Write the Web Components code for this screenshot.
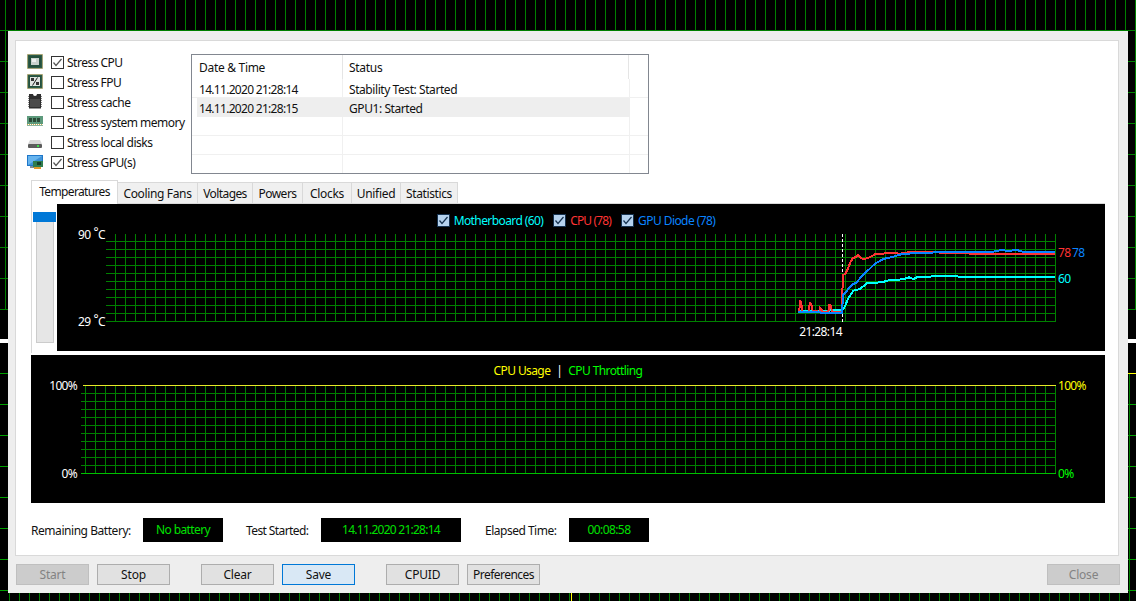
<!DOCTYPE html>
<html>
<head>
<meta charset="utf-8">
<title>System Stability Test</title>
<style>
html,body{margin:0;padding:0;background:#000;}
body{font:12px "Noto Sans","Open Sans","Liberation Sans",sans-serif;color:#111;overflow:hidden;}
</style>
</head>
<body>
<stress-desktop>
  <stress-panel>
    <top-row>
      <stress-list>
        <stress-item icon="cpu" checked>Stress CPU</stress-item>
        <stress-item icon="fpu">Stress FPU</stress-item>
        <stress-item icon="cache">Stress cache</stress-item>
        <stress-item icon="ram">Stress system memory</stress-item>
        <stress-item icon="disk">Stress local disks</stress-item>
        <stress-item icon="gpu" checked>Stress GPU(s)</stress-item>
      </stress-list>
      <log-table>
        <log-row time="14.11.2020 21:28:14" status="Stability Test: Started"></log-row>
        <log-row time="14.11.2020 21:28:15" status="GPU1: Started" selected></log-row>
        <log-row></log-row>
        <log-row></log-row>
        <log-row></log-row>
      </log-table>
    </top-row>
    <tab-strip>
      <tab-item active style="--w:87px;--ls:-.65px">Temperatures</tab-item>
      <tab-item style="--w:81px;--ls:-.35px">Cooling Fans</tab-item>
      <tab-item style="--w:56px;--ls:-.6px">Voltages</tab-item>
      <tab-item style="--w:51px;--ls:-.5px">Powers</tab-item>
      <tab-item style="--w:50px;--ls:-.3px">Clocks</tab-item>
      <tab-item style="--w:50px;--ls:-.3px">Unified</tab-item>
      <tab-item style="--w:58px;--ls:-.4px">Statistics</tab-item>
    </tab-strip>
    <tab-body>
      <temp-scale></temp-scale>
      <temp-chart>
        <legend-item color="#00ffff" style="--ls:-.6px">Motherboard (60)</legend-item>
        <legend-item color="#ff3333" style="--ls:-.85px">CPU (78)</legend-item>
        <legend-item color="#0a84ff" style="--ls:-.57px">GPU Diode (78)</legend-item>
      </temp-chart>
    </tab-body>
    <usage-chart></usage-chart>
    <status-row>
      <status-field label="Remaining Battery:" style="--label:112px;--box:80px;--ls:-.45px;--vs:-.6px">No battery</status-field>
      <status-field label="Test Started:" style="--label:75px;--box:140px;--ls:-.6px;--vs:-.75px">14.11.2020 21:28:14</status-field>
      <status-field label="Elapsed Time:" style="--label:84px;--box:80px;--ls:-.5px;--vs:-.6px">00:08:58</status-field>
    </status-row>
  </stress-panel>
  <button-bar>
    <win-button disabled>Start</win-button>
    <win-button>Stop</win-button>
    <win-button class="far">Clear</win-button>
    <win-button focused>Save</win-button>
    <win-button class="far">CPUID</win-button>
    <win-button style="--ls:-.55px">Preferences</win-button>
    <win-button disabled class="end">Close</win-button>
  </button-bar>
</stress-desktop>

<script>
const ICONS = {
  cpu: `<rect x="0.5" y="0.5" width="15" height="14" fill="#2d5c48" stroke="#b59a4c" stroke-dasharray="1 1"/>
        <rect x="2" y="2" width="12" height="11" fill="#24503d"/>
        <rect x="4" y="4" width="8" height="7" fill="#c9d2cd"/>
        <rect x="5" y="5" width="4" height="3" fill="#eef1ef"/>`,
  fpu: `<rect x="0.5" y="0.5" width="15" height="14" fill="#2d5c48" stroke="#b59a4c" stroke-dasharray="1 1"/>
        <rect x="2" y="2" width="12" height="11" fill="#24503d"/>
        <rect x="3" y="3" width="10" height="9" fill="#dfe5e1"/>
        <path d="M10.500 3.500 5.500 11.500" stroke="#222" fill="none"/>
        <rect x="4" y="4" width="3" height="3" fill="#333"/><rect x="9" y="8" width="3" height="3" fill="#333"/>`,
  cache: `<path d="M1 2h1M1 4h1M1 6h1M1 8h1M1 10h1M1 12h1M14 2h1M14 4h1M14 6h1M14 8h1M14 10h1M14 12h1" stroke="#888" transform="translate(0 .5)"/>
          <path d="M2 0h4a2 2 0 0 0 4 0h4v14.500H2z" fill="#2e2e2e"/>
          <rect x="3" y="5" width="10" height="8" fill="#4a4a4a"/>`,
  ram: `<rect x="0" y="2" width="16" height="8" fill="#5d9a7c"/>
        <path d="M2 4h3v4H2zM6 4h3v4H6zM10 4h3v4h-3z" fill="#2c4a38"/>
        <path d="M0 10.500h16" stroke="#c9a84c" stroke-dasharray="1 1"/>
        <rect x="0" y="11" width="16" height="1" fill="#8ab59f"/>`,
  disk: `<path d="M3 6h10l2 4H1z" fill="#d7d7d7"/>
         <rect x="1" y="10" width="14" height="4" rx="1" fill="#5c5c5c"/>
         <rect x="10" y="11" width="2" height="2" fill="#3fdc4a"/>`,
  gpu: `<rect x="0" y="1" width="16" height="11" fill="#1f77c9"/>
        <rect x="1" y="2" width="14" height="9" fill="#67b4ee"/>
        <path d="M1 11 15 2v9z" fill="#3f93d8"/>
        <rect x="3" y="12" width="5" height="2" fill="#7d8b96"/>
        <rect x="6" y="7" width="10" height="6" fill="#2f7d4f"/>
        <rect x="10" y="8" width="4" height="3" fill="#173f29"/>
        <rect x="7" y="13" width="7" height="2" fill="#e09a2b"/>`
}

const CHECK = `<svg width="13" height="13" viewBox="0 0 13 13"><path d="M2.500 6.500 5 9.500 10.500 3" fill="none" stroke="currentColor" stroke-width="1.200"/></svg>`

function define(name, css, html){
  customElements.define(name, class extends HTMLElement{
    constructor(){
      super()
      this.attachShadow({mode:'open'})
    }
    connectedCallback(){
      const inner = typeof html === 'function' ? html(this) : (html || '<slot></slot>')
      this.shadowRoot.innerHTML = `<style>${css}</style>${inner}`
    }
  })
}

define('stress-desktop', `
  :host{
    display:block;width:1136px;height:601px;box-sizing:border-box;padding:31px 8px 8px;
    background-color:#000;
    background-image:
      linear-gradient(#fff,#fff),
      linear-gradient(#ffff00,#ffff00),
      linear-gradient(#ffff00,#ffff00),
      repeating-linear-gradient(90deg,transparent 0 5px,#008000 5px 6px,transparent 6px 10px),
      repeating-linear-gradient(180deg,transparent 0 30px,#008000 30px 31px),
      repeating-linear-gradient(90deg,transparent 0 9px,#008000 9px 10px),
      repeating-linear-gradient(180deg,#00a000 0 1px,transparent 1px 31px);
    background-repeat:no-repeat;
    background-size:100% 4px,8px 1px,1px 8px,100% 310px,100% 310px,100% 228px,100% 228px;
    background-position:0 339px,1128px 373px,571px 593px,0 0,0 0,0 373px,0 373px;
  }
  .win{height:562px;box-sizing:border-box;background:#eeeeee;padding:9px 9px 0 7px;}
`, `<div class="win"><slot></slot></div>`)

define('stress-panel', `
  :host{display:flex;flex-direction:column;height:516px;box-sizing:border-box;background:#fff;
    border:1px solid #d9d9d9;padding:11px 13px 0 15px;}
`)

define('top-row', `
  :host{display:flex;height:128px;margin-left:-4px;}
`)

define('stress-list', `
  :host{display:flex;flex-direction:column;width:164px;flex:none;}
`)

define('stress-item', `
  :host{display:flex;align-items:center;height:20px;white-space:nowrap;letter-spacing:-.5px;}
  svg.icon{flex:none;width:16px;height:16px;margin-right:8px;}
  .box{flex:none;box-sizing:border-box;width:13px;height:13px;border:1px solid #333;background:#fff;color:#555;margin-right:3px;}
  .box svg{display:block;margin:-1px;}
`, el => `<svg class="icon" viewBox="0 0 16 16">${ICONS[el.getAttribute('icon')]}</svg>
  <span class="box">${el.hasAttribute('checked') ? CHECK : ''}</span><slot></slot>`)

define('log-table', `
  :host{display:block;box-sizing:border-box;width:458px;height:120px;margin-top:2px;border:1px solid #828790;overflow:hidden;background:#fff;}
  .head{display:grid;grid-template-columns:151px 286px 1fr;height:24px;align-items:center;letter-spacing:-.3px;}
  .head span{height:100%;display:flex;align-items:center;padding-left:7px;border-right:1px solid #e5e5e5;box-sizing:border-box;}
  .head span:nth-child(2){padding-left:6px;}
  .head span:last-child{border-right:0;}
`, `<div class="head"><span>Date &amp; Time</span><span>Status</span><span></span></div><slot></slot>`)

define('log-row', `
  :host{display:grid;grid-template-columns:151px 287px;height:19px;box-sizing:border-box;border-bottom:1px solid #f0f0f0;white-space:nowrap;}
  :host([selected]){background:linear-gradient(90deg,#fff 5px,#eeeeee 5px 438px,#fff 438px);border-bottom-color:transparent;}
  span{padding:2px 0 0 7px;line-height:18px;border-right:1px solid #f0f0f0;letter-spacing:-.7px;}
  span + span{padding-left:6px;letter-spacing:-.43px;}
  :host([selected]) span{border-right-color:#eeeeee;}
`, el => `<span>${el.getAttribute('time') || ''}</span><span>${el.getAttribute('status') || ''}</span>`)

define('tab-strip', `
  :host{display:flex;align-items:flex-end;height:24px;position:relative;z-index:1;margin-bottom:-1px;}
`)

define('tab-item', `
  :host{display:flex;align-items:center;justify-content:center;box-sizing:border-box;width:var(--w);height:21px;margin-right:-1px;margin-bottom:1px;
    background:#f0f0f0;border:1px solid #d9d9d9;border-bottom:0;white-space:nowrap;letter-spacing:var(--ls);}
  :host([active]){height:24px;margin-bottom:0;background:#fff;padding-bottom:3px;}
`)

define('tab-body', `
  :host{display:flex;height:150px;box-sizing:border-box;width:1074px;border-left:1px solid #d9d9d9;border-top:1px solid #d9d9d9;flex:none;}
`)

define('temp-scale', `
  :host{display:flex;flex-direction:column;width:25px;height:139px;flex:none;padding-top:8px;box-sizing:content-box;}
  .thumb{height:10px;width:23px;margin-left:1px;background:#0078d7;}
  .track{height:121px;width:18px;margin-left:4px;box-sizing:border-box;background:#e6e6e6;border:1px solid #cccccc;border-top:0;}
`, `<div class="thumb"></div><div class="track"></div>`)

function gridPath(xs, xe, xstep, ytop, ybot, ys, ye, ystep, xleft){
  let d = ''
  for(let x = xs; x <= xe; x += xstep) d += `M${x}.5 ${ytop}V${ybot}`
  for(let y = ys; y <= ye; y += ystep) d += `M${xleft} ${y}.5H${xe + 1}`
  return d
}

const TRACES = {
  red:'113,316 118,318 120,288 124,290 126,322 145,320 150,294 154,296 158,318 178,320 180,308 184,312 188,320 205,320 208,300 213,302 216,320 245,320 249,210 256,206 264,190 272,170 278,160 288,155 295,150 303,160 315,162 330,156 345,148 370,146 385,143 420,146 450,141 500,141 550,143 600,145 700,147 885,146',
  blue:'113,322 245,323 250,270 260,258 275,240 290,232 300,220 320,200 345,176 370,162 400,155 430,146 470,145 550,141 700,140 725,135 745,138 770,135 790,141 885,141',
  cyan:'113,318 245,316 252,310 265,280 280,257 300,252 322,234 365,232 390,225 430,223 447,217 460,222 475,215 555,214 700,216 885,215'
}

define('temp-chart', `
  :host{display:flex;flex-direction:column;width:1048px;height:147px;flex:none;background:#000;color:#fff;}
  .legend{display:flex;justify-content:center;gap:10px;height:24px;padding:9px 10px 0 0;box-sizing:border-box;}
  svg{display:block;overflow:visible;}
  text{font:12px "Noto Sans","Open Sans",sans-serif;fill:#fff;letter-spacing:-.6px;}
`, () => `<div class="legend"><slot></slot></div>
  <svg width="1048" height="123" viewBox="57 228 1048 123">
    <path d="${gridPath(115,1055,10,234,322,241,321,8,106)}" stroke="#008000" fill="none" shape-rendering="crispEdges"/>
    <path d="M842.500 234V322" stroke="#fff" stroke-dasharray="3 2" shape-rendering="crispEdges"/>
    <g transform="translate(760 205) scale(.33333)" fill="none" stroke-width="6" shape-rendering="crispEdges">
      <polyline points="${TRACES.cyan}" stroke="#00ffff"/>
      <polyline points="${TRACES.red}" stroke="#ff3333"/>
      <polyline points="${TRACES.blue}" stroke="#0a84ff"/>
    </g>
    <text x="78" y="239">90<tspan dx="3" dy="-3">°</tspan><tspan dy="3">C</tspan></text>
    <text x="78" y="326">29<tspan dx="3" dy="-3">°</tspan><tspan dy="3">C</tspan></text>
    <text x="842" y="336" text-anchor="end">21:28:14</text>
    <text x="1058" y="257" style="fill:#ff3333">78</text>
    <text x="1072" y="257" style="fill:#0a84ff">78</text>
    <text x="1058" y="283" style="fill:#00ffff">60</text>
  </svg>`)

define('legend-item', `
  :host{display:flex;align-items:center;height:14px;white-space:nowrap;letter-spacing:var(--ls);}
  .box{flex:none;box-sizing:border-box;width:13px;height:13px;background:#b5d2ee;border:1px solid #16324f;color:#16324f;margin-right:4px;}
  .box svg{display:block;margin:-1px;}
`, el => `<span class="box">${CHECK}</span><span style="color:${el.getAttribute('color')}"><slot></slot></span>`)

define('usage-chart', `
  :host{display:flex;flex-direction:column;width:1074px;height:148px;margin-top:2px;flex:none;background:#000;}
  .title{display:flex;justify-content:center;gap:6px;height:25px;padding-top:9px;box-sizing:border-box;line-height:14px;white-space:nowrap;letter-spacing:-.6px;}
  svg{display:block;overflow:visible;}
  text{font:12px "Noto Sans","Open Sans",sans-serif;fill:#fff;letter-spacing:-.7px;}
`, () => `<div class="title"><span style="color:#ffff00">CPU Usage</span><span style="color:#fff">|</span><span style="color:#00ff00">CPU Throttling</span></div>
  <svg width="1074" height="123" viewBox="31 380 1074 123">
    <path d="${gridPath(85,1055,10,386,474,393,465,8,81)}" stroke="#008000" fill="none" shape-rendering="crispEdges"/>
    <path d="M81 473.500H1056" stroke="#00c000" shape-rendering="crispEdges"/>
    <path d="M83 385.500H1056" stroke="#e8e82a" shape-rendering="crispEdges"/>
    <text x="77" y="390" text-anchor="end">100%</text>
    <text x="77" y="478" text-anchor="end">0%</text>
    <text x="1058" y="390" style="fill:#ffff00">100%</text>
    <text x="1058" y="478" style="fill:#00ff00">0%</text>
  </svg>`)

define('status-row', `
  :host{display:grid;grid-template-columns:215px 239px auto;margin-top:15px;height:24px;}
`)

define('status-field', `
  :host{display:flex;align-items:center;white-space:nowrap;}
  .label{width:var(--label);flex:none;letter-spacing:var(--ls);}
  .value{width:var(--box);height:24px;flex:none;display:flex;align-items:center;justify-content:center;background:#000;color:#00e000;padding-bottom:2px;box-sizing:border-box;letter-spacing:var(--vs);}
`, el => `<span class="label">${el.getAttribute('label')}</span><span class="value"><slot></slot></span>`)

define('button-bar', `
  :host{display:flex;gap:8px;height:21px;margin:8px -1px 0 1px;}
  ::slotted(.far){margin-left:23px;}
  ::slotted(.end){margin-left:auto;}
`)

define('win-button', `
  :host{display:flex;align-items:center;justify-content:center;box-sizing:border-box;width:73px;height:21px;
    background:#e1e1e1;border:1px solid #adadad;color:#111;white-space:nowrap;letter-spacing:var(--ls,-.2px);}
  :host([focused]){background:#d9e8f5;border-color:#0078d7;}
  :host([disabled]){background:#cccccc;border-color:#bfbfbf;color:#838383;}
`)
</script>
</body>
</html>
